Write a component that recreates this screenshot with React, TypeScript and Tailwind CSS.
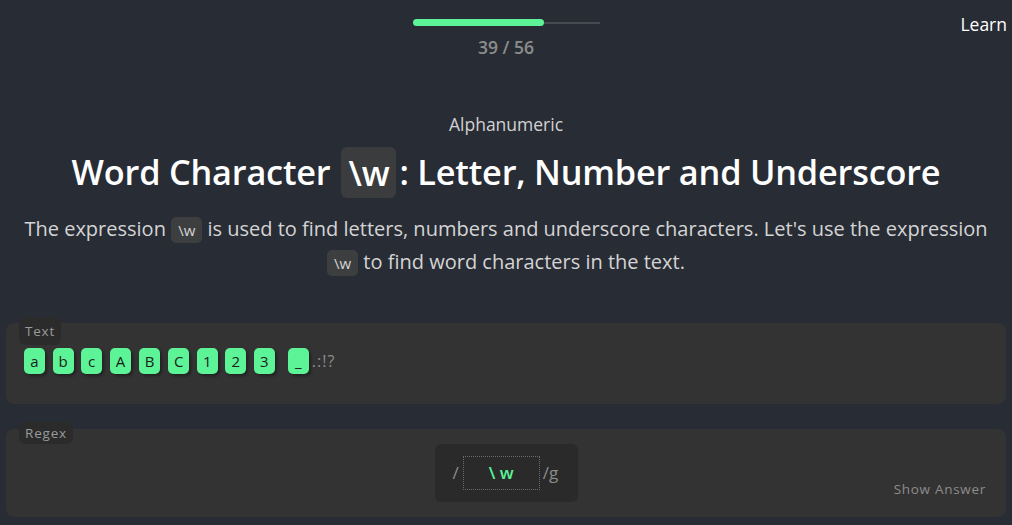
import React from "react";

const chars = ["a", "b", "c", "A", "B", "C", "1", "2", "3"];

function Tile({ c }: { c: string }) {
  return (
    <span className="inline-flex h-[26px] min-w-[21px] items-center justify-center rounded-[5px] bg-[#5cf497] px-[6px] text-[15px] text-[#1c1c1c] shadow-[2px_2px_3px_rgba(0,0,0,0.35)]">
      {c}
    </span>
  );
}

export default function App() {
  return (
    <div
      className="relative h-[525px] w-[1012px] overflow-hidden bg-[#282c35] text-white"
      style={{ fontFamily: '"Open Sans", "Noto Sans", sans-serif' }}
    >
      {/* header */}
      <div className="flex flex-col items-center pt-[19px]">
        <div className="relative h-[7px] w-[187px]">
          <div className="absolute left-0 top-[3px] h-[2px] w-full bg-[#474a50]" />
          <div className="absolute left-0 top-0 h-[7px] w-[131px] rounded-full bg-[#5cf497]" />
        </div>
        <div className="mt-[9px] text-[17.5px] font-semibold leading-[24px] text-[#8c8c8c]">39 / 56</div>
      </div>
      <div className="absolute right-[5px] top-[12px] text-[17.5px] leading-[24px] text-white">Learn</div>

      {/* title block */}
      <div className="mt-[53px] flex flex-col items-center">
        <div className="text-[17.5px] leading-[24px] text-[#d2d2d2]">Alphanumeric</div>
        <h1 className="mt-[10px] flex items-center text-[34.3px] font-semibold leading-[52px] tracking-[-0.2px] text-white">
          <span>Word Character</span>
          <span className="ml-[11px] mr-[3px] rounded-[6px] bg-[#3b3c3e] px-[7px] leading-[51px]">\w</span>
          <span>: Letter, Number and Underscore</span>
        </h1>
        <p className="mt-[15px] w-[975px] text-center text-[20px] leading-[32px] text-[#d4d4d4]">
          The expression{" "}
          <code className="rounded-[5px] bg-[#3d3e40] px-[7px] py-[3px] text-[15px]" style={{ fontFamily: '"Open Sans", sans-serif' }}>\w</code>{" "}
          is used to find letters, numbers and underscore characters. Let's use the expression{" "}
          <code className="rounded-[5px] bg-[#3d3e40] px-[7px] py-[3px] text-[15px]" style={{ fontFamily: '"Open Sans", sans-serif' }}>\w</code>{" "}
          to find word characters in the text.
        </p>
      </div>

      {/* Text panel */}
      <div className="relative mx-[6px] mt-[44px] h-[81px] rounded-[8px] bg-[#333333]">
        <div className="absolute left-[13px] top-[-6px] rounded-[6px] bg-[#2b2b2b] px-[6px] py-[3px] text-[13.5px] leading-[22px] tracking-[0.8px] text-[#9a9a9a]">
          Text
        </div>
        <div className="flex items-center pl-[18px] pt-[25px] text-[16px] text-[#8c8c8c]">
          <div className="flex gap-[7.5px]">
            {chars.map((c) => (
              <Tile key={c} c={c} />
            ))}
          </div>
          <span className="ml-[13px]">
            <Tile c="_" />
          </span>
          <span className="ml-[3px] tracking-[1px]">.:!?</span>
        </div>
      </div>

      {/* Regex panel */}
      <div className="relative mx-[6px] mt-[25px] h-[88px] rounded-[8px] bg-[#333333]">
        <div className="absolute left-[13px] top-[-7px] rounded-[6px] bg-[#2b2b2b] px-[6px] py-[0px] text-[13.5px] leading-[22px] tracking-[0.8px] text-[#9a9a9a]">
          Regex
        </div>
        <div className="flex justify-center pt-[15px]">
          <div className="flex h-[58px] w-[143px] items-center rounded-[6px] bg-[#2a2a2a] pl-[18px] text-[17px] text-[#8c8c8c]">
            <span>/</span>
            <div className="ml-[4px] flex h-[34px] w-[77px] items-center justify-center border border-dotted border-[#6a6a6a] text-[17px] font-semibold text-[#5cf497]">
              \ w
            </div>
            <span className="ml-[3px]">/g</span>
          </div>
        </div>
        <div className="absolute bottom-[19px] right-[20px] text-[13.5px] leading-[18px] tracking-[0.7px] text-[#8c8c8c]">
          Show Answer
        </div>
      </div>
    </div>
  );
}
